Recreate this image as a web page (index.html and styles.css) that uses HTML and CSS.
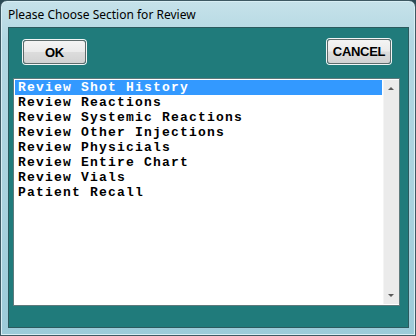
FILE: index.html
```html
<!DOCTYPE html>
<html lang="en">
  <head>
    <meta charset="UTF-8" />
    <title>Please Choose Section for Review</title>
    <link rel="stylesheet" href="styles.css">
  </head>
  <body>
    <div class="window">
      <div class="title-bar">Please Choose Section for Review</div>
      <div class="client">
        <div class="button-row">
          <button class="btn btn-ok">OK</button>
          <button class="btn btn-cancel">CANCEL</button>
        </div>
        <div class="listbox">
          <ul class="items">
            <li class="selected">Review Shot History</li>
            <li>Review Reactions</li>
            <li>Review Systemic Reactions</li>
            <li>Review Other Injections</li>
            <li>Review Physicials</li>
            <li>Review Entire Chart</li>
            <li>Review Vials</li>
            <li>Patient Recall</li>
          </ul>
          <div class="scrollbar">
            <span class="arrow arrow-up"></span>
            <span class="arrow arrow-down"></span>
          </div>
        </div>
      </div>
    </div>
  </body>
</html>
```

FILE: styles.css
```css
body {
  margin: 0;
  background-color: #2b4a55;
}

.window {
  box-sizing: border-box;
  display: flex;
  flex-direction: column;
  width: 416px;
  height: 336px;
  border: 1px solid #3e5963;
  border-radius: 7px 7px 0 0;
  background: linear-gradient(180deg, #c6e2ea 0%, #b2d7e2 12%, #a9d2de 60%, #9ccbd9 100%);
  box-shadow: inset 0 0 0 1px #d8eef4;
}

.title-bar {
  height: 26px;
  padding-left: 7px;
  line-height: 27px;
  font-family: "Noto Sans", "Open Sans", sans-serif;
  font-size: 12px;
  color: #000;
}

.client {
  box-sizing: border-box;
  display: flex;
  flex-direction: column;
  height: 301px;
  margin: 0 6px 0 7px;
  padding: 11px 8px 21px 4px;
  background-color: #207b7b;
  border: 1px solid #2b5a5e;
}

.button-row {
  display: flex;
  justify-content: space-between;
  padding: 0 9px 0 10px;
}

.btn {
  box-sizing: border-box;
  height: 25px;
  padding: 0;
  border: 1px solid #5f6c6c;
  border-radius: 3px;
  background: linear-gradient(180deg, #f4f4f4 0%, #ebebeb 48%, #dcdcdc 52%, #d2d2d2 100%);
  box-shadow: 0 0 0 1px #f2f6f6;
  font-family: "Liberation Sans", Arial, sans-serif;
  font-size: 13px;
  font-weight: bold;
  letter-spacing: -0.3px;
  color: #000;
}

.btn-ok {
  width: 63px;
  margin-top: 1px;
  height: 24px;
}

.btn-cancel {
  width: 64px;
}

.listbox {
  display: flex;
  flex: 1;
  margin-top: 14px;
  background-color: #fff;
  border: 1px solid #5e7a7c;
}

.items {
  flex: 1;
  margin: 0;
  padding: 1px 1px 0 1px;
  list-style: none;
  font-family: "Liberation Mono", monospace;
  font-size: 13px;
  font-weight: bold;
  letter-spacing: 1.2px;
  line-height: 15px;
  color: #000;
}

.items li {
  height: 15px;
  padding-left: 3px;
  white-space: pre;
}

.items .selected {
  background-color: #3399ff;
  color: #fff;
}

.scrollbar {
  position: relative;
  width: 15px;
  margin: 1px 0;
  background-color: #ebebeb;
  border-left: 1px solid #f4f4f4;
}

.arrow {
  position: absolute;
  left: 4px;
  width: 0;
  height: 0;
  border-left: 3px solid transparent;
  border-right: 3px solid transparent;
}

.arrow-up {
  top: 7px;
  border-bottom: 3px solid #5a5a5a;
}

.arrow-down {
  bottom: 7px;
  border-top: 3px solid #5a5a5a;
}
```
